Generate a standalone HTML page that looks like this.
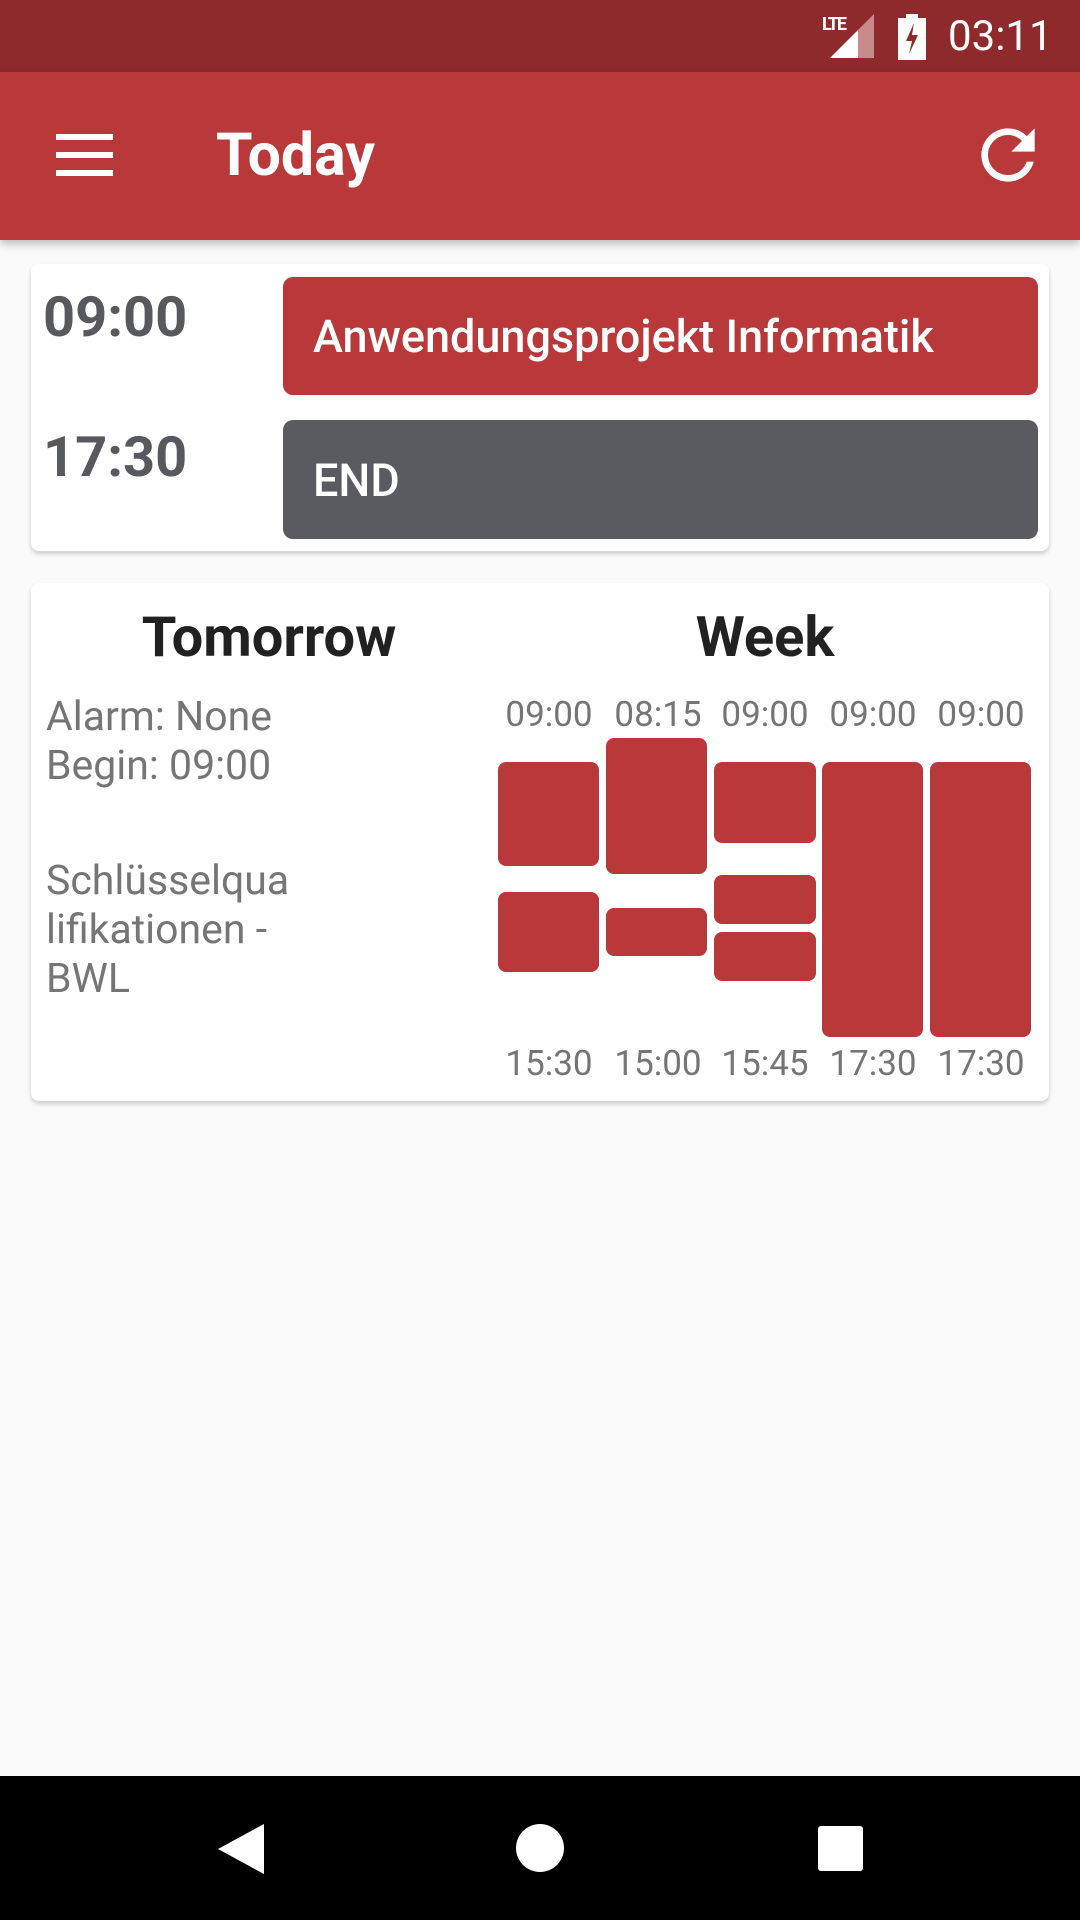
<!DOCTYPE html>
<html><head><meta charset="utf-8"><style>
*{margin:0;padding:0;box-sizing:border-box}
body{width:1080px;height:1920px;background:#fafafa;font-family:"Roboto","Liberation Sans",sans-serif;position:relative;overflow:hidden}
.a{position:absolute}
.card{background:#fff;border-radius:8px;box-shadow:0 3px 5px rgba(0,0,0,.18)}
.bar{position:absolute;background:#b9383a;border-radius:8px}
.wt{position:absolute;width:110px;text-align:center;font-size:35px;color:#757575}
</style></head><body>
<div class="a" style="left:0;top:0;width:1080px;height:72px;background:#8e2a2c"></div>
<div class="a" style="left:0;top:72px;width:1080px;height:168px;background:#b9383a;box-shadow:0 4px 8px rgba(0,0,0,.25)"></div>
<div class="a" style="left:822px;top:14px;color:#fff;font-size:18px;font-weight:bold;letter-spacing:-2px">LTE</div>
<svg class="a" style="left:830px;top:14px" width="44" height="44"><polygon points="44,0 44,44 0,44" fill="#c98a8b"/><polygon points="28,16 28,44 0,44" fill="#fff"/></svg>
<svg class="a" style="left:898px;top:14px" width="30" height="46"><rect x="8" y="0" width="12" height="5" fill="#fff"/><rect x="0" y="4" width="28" height="42" fill="#fff"/><polygon points="16,9 8,27 14,27 11,40 20,21 14,21" fill="#8e2a2c"/></svg>
<div class="a" style="left:948px;top:12px;color:#fff;font-size:42px">03:11</div>
<div class="a" style="left:56px;top:134px;width:57px;height:6px;background:#fff"></div>
<div class="a" style="left:56px;top:152px;width:57px;height:6px;background:#fff"></div>
<div class="a" style="left:56px;top:170px;width:57px;height:6px;background:#fff"></div>
<div class="a" style="left:216px;top:121px;color:#fff;font-size:59px;font-weight:bold">Today</div>
<svg class="a" style="left:968px;top:115px" width="80" height="80" viewBox="0 0 24 24"><path fill="#fff" d="M17.65 6.35A7.958 7.958 0 0 0 12 4c-4.42 0-7.990 3.58-7.990 8s3.570 8 7.990 8c3.730 0 6.840-2.550 7.730-6h-2.080A5.990 5.990 0 0 1 12 18c-3.310 0-6-2.690-6-6s2.690-6 6-6c1.660 0 3.140.69 4.220 1.780L13 11h7V4l-2.350 2.350z"/></svg>
<div class="a card" style="left:31px;top:264px;width:1018px;height:287px"></div>
<div class="a" style="left:43px;top:284px;font-size:56px;font-weight:bold;color:#58595e">09:00</div>
<div class="a" style="left:43px;top:424px;font-size:56px;font-weight:bold;color:#58595e">17:30</div>
<div class="a" style="left:283px;top:277px;width:755px;height:118px;background:#b9383a;border-radius:10px"></div>
<div class="a" style="left:313px;top:310px;font-size:45px;color:#fff;font-weight:500">Anwendungsprojekt Informatik</div>
<div class="a" style="left:283px;top:420px;width:755px;height:119px;background:#5a5b60;border-radius:10px"></div>
<div class="a" style="left:313px;top:454px;font-size:45px;color:#fff;font-weight:500">END</div>
<div class="a card" style="left:31px;top:583px;width:1018px;height:518px"></div>
<div class="a" style="left:69px;top:604px;width:400px;text-align:center;font-size:56px;font-weight:bold;color:#212121">Tomorrow</div>
<div class="a" style="left:565px;top:604px;width:400px;text-align:center;font-size:56px;font-weight:bold;color:#212121">Week</div>
<div class="a" style="left:46px;top:693px;font-size:41px;line-height:49px;color:#757575">Alarm: None<br>Begin: 09:00</div>
<div class="a" style="left:46px;top:857px;font-size:41px;line-height:49px;color:#757575">Schlüsselqua<br>lifikationen -<br>BWL</div>
<div class="wt" style="left:494px;top:694px">09:00</div>
<div class="wt" style="left:603px;top:694px">08:15</div>
<div class="wt" style="left:710px;top:694px">09:00</div>
<div class="wt" style="left:818px;top:694px">09:00</div>
<div class="wt" style="left:926px;top:694px">09:00</div>
<div class="bar" style="left:498px;top:762px;width:101px;height:104px"></div>
<div class="bar" style="left:498px;top:892px;width:101px;height:80px"></div>
<div class="bar" style="left:606px;top:738px;width:101px;height:136px"></div>
<div class="bar" style="left:606px;top:908px;width:101px;height:48px"></div>
<div class="bar" style="left:714px;top:762px;width:102px;height:81px"></div>
<div class="bar" style="left:714px;top:875px;width:102px;height:49px"></div>
<div class="bar" style="left:714px;top:932px;width:102px;height:49px"></div>
<div class="bar" style="left:822px;top:762px;width:101px;height:275px"></div>
<div class="bar" style="left:930px;top:762px;width:101px;height:275px"></div>
<div class="wt" style="left:494px;top:1043px">15:30</div>
<div class="wt" style="left:603px;top:1043px">15:00</div>
<div class="wt" style="left:710px;top:1043px">15:45</div>
<div class="wt" style="left:818px;top:1043px">17:30</div>
<div class="wt" style="left:926px;top:1043px">17:30</div>
<div class="a" style="left:0;top:1776px;width:1080px;height:144px;background:#000"></div>
<svg class="a" style="left:218px;top:1824px" width="46" height="50"><polygon points="46,0 46,50 0,25" fill="#fff"/></svg>
<div class="a" style="left:516px;top:1824px;width:48px;height:48px;border-radius:50%;background:#fff"></div>
<div class="a" style="left:818px;top:1826px;width:45px;height:45px;border-radius:3px;background:#fff"></div>
</body></html>
